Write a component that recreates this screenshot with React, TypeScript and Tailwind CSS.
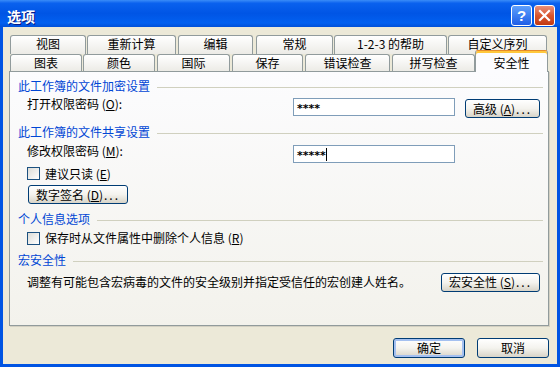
import type { ReactNode } from "react"

const ROW1 = [
  { label: "视图", cls: "w-[76px]" },
  { label: "重新计算", cls: "w-[89px] ml-[1px]" },
  { label: "编辑", cls: "w-[75px] ml-[2px]" },
  { label: "常规", cls: "w-[77px] ml-[3px]" },
  { label: "1-2-3 的帮助", cls: "w-[113px] ml-[1px]" },
  { label: "自定义序列", cls: "w-[99px] ml-[1px]" },
]

const ROW2 = [
  { label: "图表", cls: "w-[72px]" },
  { label: "颜色", cls: "w-[72px] ml-[1px]" },
  { label: "国际", cls: "w-[73px] ml-[2px]" },
  { label: "保存", cls: "w-[71px] ml-[2px]" },
  { label: "错误检查", cls: "w-[85px] ml-[2px]" },
  { label: "拼写检查", cls: "w-[83px] ml-[2px]" },
]

function Tab({ label, className }: { label: string; className: string }) {
  return (
    <div
      className={`h-full flex justify-center pt-[1px] border border-b-0 border-[#919b9c] rounded-t-[3px] bg-gradient-to-b from-white to-[#ecebe6] leading-[14px] whitespace-nowrap ${className}`}
    >
      {label}
    </div>
  )
}

function Header({ text, className }: { text: string; className: string }) {
  return (
    <div className={`flex items-center h-[16px] pl-[8px] pr-[5px] ${className}`}>
      <span className="text-[#0046d5] whitespace-nowrap leading-[16px]">{text}</span>
      <div className="flex-1 h-px bg-[#d0d0bf] ml-[7px] mt-[2px]" />
    </div>
  )
}

function XpButton({
  children,
  className,
  isDefault,
}: {
  children: ReactNode
  className: string
  isDefault?: boolean
}) {
  return (
    <div
      className={`flex items-center justify-center border border-[#003c74] rounded-[3px] bg-gradient-to-b from-white via-[#f4f3ee] to-[#d8d4c8] leading-[14px] whitespace-nowrap ${
        isDefault ? "shadow-[inset_0_0_0_2px_#a4c0f0]" : ""
      } ${className}`}
    >
      {children}
    </div>
  )
}

function CheckBox() {
  return (
    <div className="w-[13px] h-[13px] shrink-0 border border-[#1c5180] bg-gradient-to-br from-[#dcdcd7] to-white" />
  )
}

function U({ children }: { children: string }) {
  return <span className="underline underline-offset-1">{children}</span>
}

function Dots() {
  return <span className="tracking-[2px] ml-[1px]">...</span>
}

export default function App() {
  return (
    <div className="w-[560px] h-[367px] flex flex-col bg-[#0054e3] font-['Noto_Sans_CJK_SC',sans-serif] text-[12px] text-black overflow-hidden">
      {/* title bar */}
      <div className="h-[27px] shrink-0 flex items-center pt-[4px] pl-[7px] pr-[5px] bg-[linear-gradient(to_bottom,#3a8cf8_0%,#0a61ee_12%,#0055e5_50%,#0260f0_85%,#0050d8_100%)]">
        <span className="flex-1 text-white font-bold text-[14px] leading-[16px] [text-shadow:1px_1px_#0a1883]">
          选项
        </span>
        <div className="flex gap-[2px]">
          <div className="w-[21px] h-[21px] rounded-[3px] border border-white bg-gradient-to-b from-[#5e9ffc] to-[#1f5de6] flex items-center justify-center text-white font-bold text-[15px] leading-none font-['Liberation_Sans',sans-serif]">
            ?
          </div>
          <div className="w-[21px] h-[21px] rounded-[3px] border border-white bg-gradient-to-b from-[#e9907a] via-[#d8562e] to-[#c13910] flex items-center justify-center">
            <svg width="13" height="13" viewBox="0 0 13 13">
              <path d="M2 2 L11 11 M11 2 L2 11" stroke="white" strokeWidth="2.2" strokeLinecap="square" />
            </svg>
          </div>
        </div>
      </div>

      {/* body */}
      <div className="flex-1 mx-[3px] mb-[3px] bg-[#ece9d8] pt-[8px] flex flex-col">
        {/* tabs */}
        <div className="ml-[7px] h-[36px] flex flex-col">
          <div className="h-[19px] flex">
            {ROW1.map((t) => (
              <Tab key={t.label} label={t.label} className={t.cls} />
            ))}
          </div>
          <div className="h-[17px] flex">
            {ROW2.map((t) => (
              <Tab key={t.label} label={t.label} className={t.cls} />
            ))}
            <div className="relative z-10 w-[73px] h-[22px] -mt-[4px] flex justify-center pt-[5px] border border-b-0 border-[#919b9c] border-t-[#e68b2c] rounded-t-[3px] bg-[#fcfcfe] shadow-[inset_0_2px_0_#ffc83c] leading-[14px]">
              安全性
            </div>
          </div>
        </div>

        {/* panel */}
        <div className="ml-[6px] w-[540px] h-[255px] border border-[#919b9c] bg-gradient-to-b from-[#fcfcfe] to-[#f3f2ec] shadow-[1px_1px_0_#d3d0c2] flex flex-col">
          <Header text="此工作簿的文件加密设置" className="mt-[6px]" />
          <div className="mt-[3px] h-[21px] flex items-start pl-[17px]">
            <span className="w-[266px] leading-[14px]">
              打开权限密码 (<U>O</U>):
            </span>
            <div className="mt-[1px] w-[162px] h-[18px] border border-[#7f9db9] bg-white pl-[3px] flex items-center font-['DejaVu_Sans',sans-serif] font-bold text-[11px]">
              <span className="translate-y-[2px] leading-[14px]">****</span>
            </div>
            <XpButton className="ml-[10px] mt-[2px] w-[75px] h-[19px]">
              高级 (<U>A</U>)<Dots />
            </XpButton>
          </div>

          <Header text="此工作簿的文件共享设置" className="mt-[6px]" />
          <div className="mt-[4px] h-[19px] flex items-start pl-[17px]">
            <span className="w-[266px] leading-[14px]">
              修改权限密码 (<U>M</U>):
            </span>
            <div className="mt-[1px] w-[162px] h-[18px] border border-[#7f9db9] bg-white pl-[3px] flex items-center font-['DejaVu_Sans',sans-serif] font-bold text-[11px]">
              <span className="translate-y-[2px] leading-[14px]">*****</span>
              <span className="w-px h-[13px] bg-black" />
            </div>
          </div>
          <div className="mt-[3px] h-[15px] flex items-center pl-[17px] gap-[5px]">
            <CheckBox />
            <span className="leading-[14px]">
              建议只读 (<U>E</U>)
            </span>
          </div>
          <div className="mt-[4px] pl-[18px]">
            <XpButton className="w-[100px] h-[19px]">
              数字签名 (<U>D</U>)<Dots />
            </XpButton>
          </div>

          <Header text="个人信息选项" className="mt-[7px]" />
          <div className="mt-[4px] h-[14px] flex items-center pl-[17px] gap-[5px]">
            <CheckBox />
            <span className="leading-[14px]">
              保存时从文件属性中删除个人信息 (<U>R</U>)
            </span>
          </div>

          <Header text="宏安全性" className="mt-[7px]" />
          <div className="mt-[4px] h-[20px] flex items-center justify-between pl-[17px] pr-[8px]">
            <span className="leading-[14px]">
              调整有可能包含宏病毒的文件的安全级别并指定受信任的宏创建人姓名。
            </span>
            <XpButton className="w-[99px] h-[19px]">
              宏安全性 (<U>S</U>)<Dots />
            </XpButton>
          </div>
        </div>

        {/* dialog buttons */}
        <div className="mt-[12px] flex justify-end gap-[12px] pr-[8px]">
          <XpButton isDefault className="w-[72px] h-[20px]">
            确定
          </XpButton>
          <XpButton className="w-[72px] h-[20px]">取消</XpButton>
        </div>
      </div>
    </div>
  )
}
